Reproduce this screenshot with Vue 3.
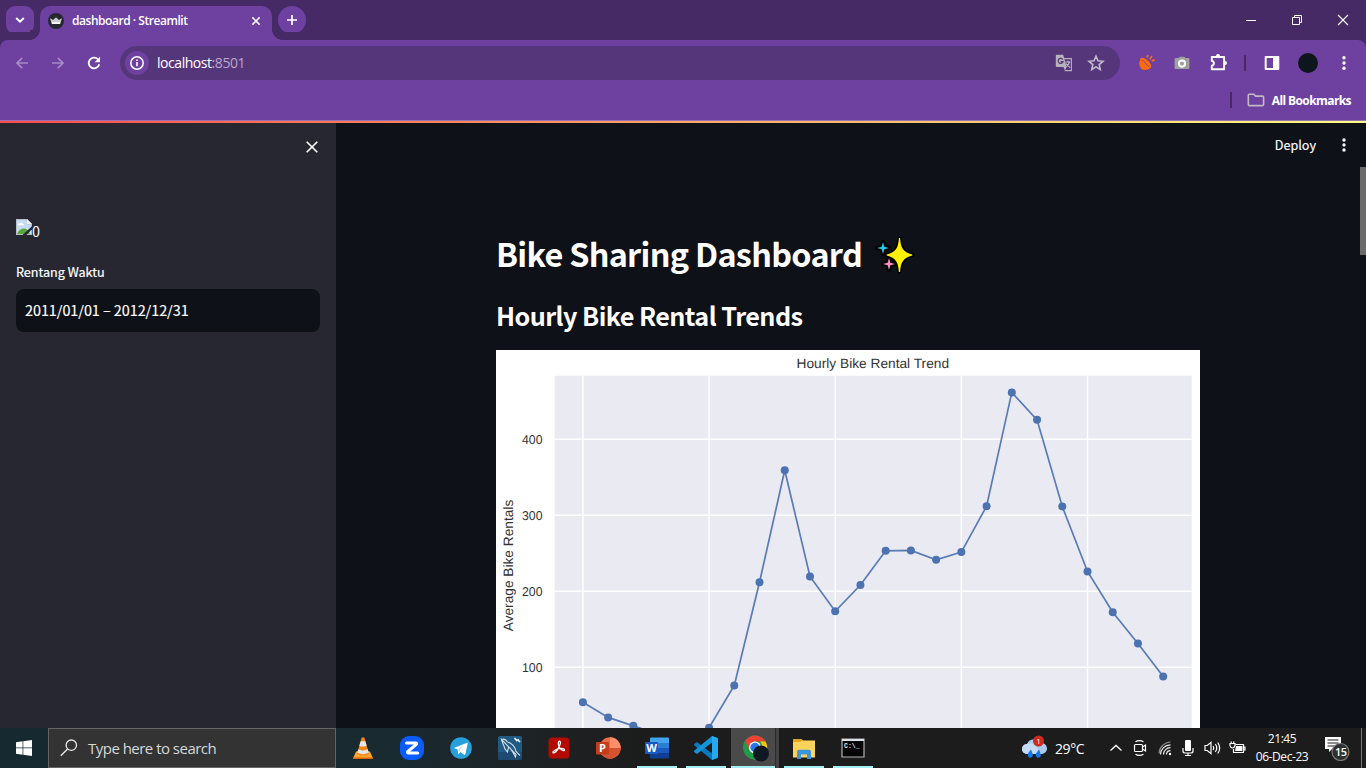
<script setup>
const rentals = [53.9, 34.1, 23, 11.7, 6.4, 20.4, 76.1, 212, 359.2, 219.5, 173.7, 208.2, 253.3, 253.8, 241.4, 251.6, 312, 461.7, 425.6, 311.6, 226.1, 172.4, 131.3, 87.8]
const px = (h) => 86.9 + h * 25.23
const py = (v) => 393.3 - v * 0.76
const points = rentals.map((v, h) => ({ x: px(h), y: py(v) }))
const path = points.map((p) => `${p.x},${p.y}`).join(' ')
const xTicks = [0, 5, 10, 15, 20].map(px)
const yTicks = [400, 300, 200, 100].map((v) => ({ v, y: py(v) }))
</script>

<template>
  <div class="screen">
    <header class="tabs">
      <button class="search-tabs"><svg width="10" height="8" viewBox="0 0 10 8"><path d="M1.2 2 5 5.7 8.8 2" fill="none" stroke="#fff" stroke-width="1.9"/></svg></button>
      <div class="tab">
        <svg class="favicon" width="16" height="16" viewBox="0 0 16 16"><circle cx="8" cy="8" r="8" fill="#262730"/><path d="M2 5.300 5.200 7 8 4.200 10.800 7 14 5.300l-1.800 5.500H3.800z" fill="#ccc"/><path d="M3.700 9.300h8.600l-.5 1.600H4.200z" fill="#fff"/></svg>
        <span class="tab-title">dashboard · Streamlit</span>
        <svg class="tab-close" width="10" height="10" viewBox="0 0 10 10"><path d="m1.4 1.4 7.2 7.2m0-7.2L1.4 8.6" stroke="#fff" stroke-width="1.5"/></svg>
      </div>
      <button class="new-tab"><svg width="12" height="12" viewBox="0 0 12 12"><path d="M6 1v10M1 6h10" stroke="#fff" stroke-width="1.7"/></svg></button>
      <div class="window-controls">
        <svg width="12" height="12" viewBox="0 0 12 12"><path d="M1 6.5h10" stroke="#fff"/></svg>
        <svg width="12" height="12" viewBox="0 0 12 12"><path d="M1.5 3.5h7v7h-7zM3.5 3V1.5h7v7H9" fill="none" stroke="#fff"/></svg>
        <svg width="12" height="12" viewBox="0 0 12 12"><path d="m1 1 10 10M11 1 1 11" stroke="#fff" stroke-width="1.1"/></svg>
      </div>
    </header>

    <div class="chrome-body">
      <div class="toolbar">
        <svg class="nav back" width="16" height="16" viewBox="0 0 16 16"><path d="M14 8H3m5.200-5.200L3 8l5.200 5.200" fill="none" stroke="#a68ac6" stroke-width="1.7"/></svg>
        <svg class="nav forward" width="16" height="16" viewBox="0 0 16 16"><path d="M2 8h11M7.800 2.800 13 8l-5.200 5.200" fill="none" stroke="#a68ac6" stroke-width="1.7"/></svg>
        <svg class="nav reload" width="16" height="16" viewBox="0 0 16 16"><path d="M13.200 9.200A5.300 5.300 0 1 1 12 4.500" fill="none" stroke="#fff" stroke-width="1.8"/><path d="M14 1.700v5.500H8.600z" fill="#fff"/></svg>
        <div class="omnibox">
          <span class="info"><svg width="16" height="16" viewBox="0 0 16 16"><circle cx="8" cy="8" r="6.200" fill="none" stroke="#fff" stroke-width="1.5"/><path d="M8 7v4.200M8 4.400v1.700" stroke="#fff" stroke-width="1.600"/></svg></span>
          <span class="url">localhost<i>:8501</i></span>
          <svg class="translate" width="18" height="18" viewBox="0 0 18 18"><path d="M8 4.600h8.400v12H9.800" fill="none" stroke="#b7aebf" stroke-width="1.100"/><path d="M1.800.8h6.400L11.700 13H1.800a1 1 0 0 1-1-1V1.800a1 1 0 0 1 1-1z" fill="#b7b0bd"/><path d="M7.800 5.500A2.500 2.500 0 1 0 8 7.700H5.800" fill="none" stroke="#54366f" stroke-width="1.200"/><path d="M10.500 8h5m-2.500-1.200V8m1.500 0c-.5 2-1.500 3.400-3 4.600m-.5-3 4.200 4" fill="none" stroke="#c6bece" stroke-width="1.100"/><path d="m8.500 13 1.400 3.600 1.800-3.600z" fill="#b7b0bd"/></svg>
          <svg class="star" width="18" height="18" viewBox="0 0 18 18"><path d="m9 2.200 2 4.600 5 .5-3.800 3.300 1.100 4.900L9 12.900l-4.300 2.600 1.100-4.900L2 7.300l5-.5z" fill="none" stroke="#c3bacc" stroke-width="1.600"/></svg>
        </div>
        <svg class="ext1" width="20" height="20" viewBox="0 0 20 20"><path d="M4.100 5.600C1.700 8.600 1.600 13 4.200 15.400s7 2 9.800-1.200z" fill="#ff6a0c"/><path d="M3.600 5c2.400-.9 5 .3 7.200 2.500s4 4.900 3.200 6.900c-2 1-5.400-.7-7.800-3.200C4 8.800 2.700 6.200 3.600 5z" fill="#ff6a0c"/><path d="m5.100 6.700 6.800 7.200" stroke="#713aa0" stroke-width=".8"/><path d="M10 4.400 11 2m1.700 4.300L15 3.200m-.3 4.700 3-1" stroke="#ff6a0c" stroke-width="1.700"/></svg>
        <svg class="ext2" width="20" height="20" viewBox="0 0 20 20"><path d="M3.800 5h2.700L7.800 3.700h4.400L13.500 5h2.700a1.200 1.200 0 0 1 1.200 1.200v8.700a1.200 1.200 0 0 1-1.200 1.200H3.800a1.200 1.200 0 0 1-1.200-1.200V6.200A1.200 1.200 0 0 1 3.800 5z" fill="#a0a0a0"/><circle cx="10" cy="10.600" r="3.100" fill="none" stroke="#fff" stroke-width="2"/></svg>
        <svg class="puzzle" width="20" height="20" viewBox="0 0 20 20"><path d="M2.800 4h12.300v12.300H2.800v-3.500c2.800-.4 2.800-4.500 0-4.900z" fill="none" stroke="#fff" stroke-width="1.900" stroke-linejoin="round"/><path d="M7 3.500V3a2 2 0 0 1 4 0v.5zM15.500 8.100h.5a2 2 0 0 1 0 4h-.5z" fill="#fff"/></svg>
        <i class="vsep"></i>
        <svg class="panel" width="20" height="20" viewBox="0 0 20 20"><path d="M3.700 4h12.600v12H3.700z" fill="none" stroke="#fff" stroke-width="2" stroke-linejoin="round"/><path d="M11 4h5.300v12H11z" fill="#fff"/></svg>
        <i class="avatar"></i>
        <svg class="dots" width="20" height="20" viewBox="0 0 20 20" fill="#fff"><circle cx="10" cy="4.800" r="1.700"/><circle cx="10" cy="10" r="1.700"/><circle cx="10" cy="15.200" r="1.700"/></svg>
      </div>
      <div class="bookmarks">
        <i class="vsep"></i>
        <svg width="18" height="14" viewBox="0 0 18 14"><path d="M2.300 1.300h4.600l1.700 1.800h7q1 0 1 1v7.500q0 1-1 1H2.300q-1 0-1-1V2.300q0-1 1-1z" fill="none" stroke="#c0b8c4" stroke-width="1.600"/></svg>
        <span>All Bookmarks</span>
      </div>
    </div>
    <div class="decoration"></div>

    <div class="page">
      <aside class="sidebar">
        <svg class="side-close" width="14" height="14" viewBox="0 0 14 14"><path d="m1.700 1.700 10.600 10.600m0-10.600L1.700 12.300" stroke="#fff" stroke-width="1.600"/></svg>
        <div class="missing">
          <svg width="16" height="16" viewBox="0 0 16 16"><path d="M0 0h11l5 5v11H0z" fill="#b9bec5"/><path d="M1 1h9.800v4.400H15V15H1z" fill="#c5dbf8"/><path d="M2 5.800c0-1.400 1.400-1.800 2-1.200.8-1.800 3-1 3 .5 1.300-.1 1.200 1.200 1 1.200H2z" fill="#fff"/><path d="M1 15c1.200-3.400 3.700-5.500 6.600-5.500 3 0 5.300 2 6.400 5.500z" fill="#5ba83a"/><path d="M11 0v5h5z" fill="#f4f5f8"/><path d="M16 7.200v3L10.300 16H6.500z" fill="#262730"/></svg><span>0</span>
        </div>
        <label>Rentang Waktu</label>
        <div class="date">2011/01/01 – 2012/12/31</div>
      </aside>
      <main class="main">
        <div class="app-menu">
          <span>Deploy</span>
          <svg width="6" height="16" viewBox="0 0 6 16" fill="#fafafa"><circle cx="3" cy="3" r="1.700"/><circle cx="3" cy="8" r="1.700"/><circle cx="3" cy="13" r="1.700"/></svg>
        </div>
        <div class="content">
          <h1><span>Bike Sharing Dashboard</span>
            <svg width="40" height="40" viewBox="0 0 40 40"><g stroke="#000" stroke-width="4.400" stroke-linejoin="round"><path d="m8 8 1.300 4.700L14 14l-4.700 1.300L8 20l-1.300-4.700L2 14l4.700-1.300z" transform="translate(0 -1)"/><path d="m14 23 1.300 4.700L20 29l-4.700 1.300L14 35l-1.300-4.700L8 29l4.700-1.300z"/><path d="M24.500 3.500c.8 9 3 13.500 12.800 16.500-9.800 3-12 7.500-12.800 16.500C23.700 27.500 21.500 23 11.700 20c9.800-3 12-7.500 12.800-16.500z"/></g><path d="m8 8 1.300 4.700L14 14l-4.700 1.300L8 20l-1.300-4.700L2 14l4.700-1.300z" transform="translate(0 -1)" fill="#26c6ed"/><path d="m14 23 1.300 4.700L20 29l-4.700 1.300L14 35l-1.300-4.700L8 29l4.700-1.300z" fill="#ff8fc4"/><path d="M23.900 3h1.200c.6 9.500 2.800 14 12.200 16.500v1C27.900 23 25.700 27.500 25.100 37h-1.200c-.6-9.500-2.800-14-12.200-16.500v-1C21.100 17 23.300 12.500 23.900 3z" fill="#fff100"/></svg>
          </h1>
          <h2>Hourly Bike Rental Trends</h2>
          <svg class="chart" width="704" height="378" viewBox="0 0 704 378">
            <path d="M0 0h704v378H0z" fill="#fff"/>
            <path d="M58.700 25.700h637V378h-637z" fill="#eaeaf2"/>
            <g stroke="#fff" stroke-width="1.400">
              <path v-for="x in xTicks" :key="x" :d="`M${x} 25.700V378`"/>
              <path v-for="t in yTicks" :key="t.v" :d="`M58.700 ${t.y}h637`"/>
            </g>
            <g class="chart-text">
              <text x="376.800" y="18" text-anchor="middle" textLength="152.500" lengthAdjust="spacingAndGlyphs">Hourly Bike Rental Trend</text>
              <text v-for="t in yTicks" :key="t.v" class="tick" x="46.500" :y="t.y + 4.600" text-anchor="end" textLength="20.500" lengthAdjust="spacingAndGlyphs">{{ t.v }}</text>
              <text transform="translate(17.200 215.500) rotate(-90)" text-anchor="middle" textLength="131.500" lengthAdjust="spacingAndGlyphs">Average Bike Rentals</text>
            </g>
            <polyline :points="path" fill="none" stroke="#4c72b0" stroke-width="1.700" stroke-opacity=".92"/>
            <circle v-for="p in points" :key="p.x" :cx="p.x" :cy="p.y" r="4" fill="#4c72b0"/>
          </svg>
        </div>
        <i class="scroll-thumb"></i>
      </main>
    </div>

    <footer class="taskbar">
      <div class="start"><svg width="16" height="16" viewBox="0 0 16 16" fill="#fff"><path d="M0 2.200 6.600 1.300v6.300H0zM7.300 1.200 16 0v7.600H7.300zM0 8.300h6.600v6.400L0 13.800zM7.300 8.300H16V16l-8.700-1.200z"/></svg></div>
      <div class="search">
        <svg width="18" height="18" viewBox="0 0 18 18"><circle cx="11.300" cy="6.200" r="5.200" fill="none" stroke="#e6e6e6" stroke-width="1.300"/><path d="m7.600 10-6.800 6.800" stroke="#e6e6e6" stroke-width="1.400"/></svg>
        <span>Type here to search</span>
      </div>
      <div class="apps">
        <div class="app"><svg width="24" height="24" viewBox="0 0 24 24"><path d="m5 15.500-3 7h20l-3-7z" fill="#ffa52b"/><path d="M2 21.500h20V23H2z" fill="#dd6800"/><path d="M10.600 1.800q1.400-1 2.800 0L18 18q-6 3-12 0z" fill="#f58413"/><path d="M9.700 5.200h4.600l1.400 4.500q-3.700 1.700-7.400 0zM7.200 13.300q4.800 2.200 9.600 0l1 3.500q-5.800 2.900-11.600 0z" fill="#e3e5e6"/></svg></div>
        <div class="app"><svg width="24" height="24" viewBox="0 0 24 24"><rect width="24" height="24" rx="9" fill="#0b5cff"/><path d="M6.500 7h9.700q1 .2 0 1.300L7.800 15.500Q7 17 8.400 17h9.300" fill="none" stroke="#fff" stroke-width="3" stroke-linecap="round"/></svg></div>
        <div class="app"><svg width="24" height="24" viewBox="0 0 24 24"><circle cx="12" cy="12" r="10.800" fill="#27a1dc"/><path d="m4.800 11.900 12.700-5c.8-.3 1.300.1 1.100 1.100l-2.200 10c-.2.900-.8 1-1.600.6l-3.300-2.500-1.600 1.600c-.5.400-.8.300-.9-.5l-.4-3.800z" fill="#fff"/><path d="m9 13 6.200-4.200-4.500 5.100-.2 2.300z" fill="#c6dfed"/></svg></div>
        <div class="app"><svg width="24" height="24" viewBox="0 0 24 24"><rect width="24" height="24" rx="2" fill="#215a83"/><path d="M0 16h24v6a2 2 0 0 1-2 2H2a2 2 0 0 1-2-2z" fill="#1d4a70"/><path d="M3.500 3.500c2.500-1 4.500 0 6 2.500 5 1.500 7.500 5 8.500 9.500l4 4m-4-1-.5 2.500-2.500-4.500c-1.500-2-2-4.500-4.500-5.500L9.500 16 7 13C6 9 4 6.500 3.500 3.500z" fill="none" stroke="#cfdde5" stroke-width="1.100"/><path d="m16.500 2 2.200 2.400 2.300-.8M20 4l2 2" stroke="#e9f2f7" stroke-width="1.700"/></svg></div>
        <div class="app"><svg width="24" height="24" viewBox="0 0 24 24"><rect x="1.500" y="1.500" width="21" height="21" rx="3.500" fill="#b30b00"/><path d="M11.700 5.700c1-1.500 2.500.4 1.200 3.100-1.200 3.200-3.600 7-5.500 7.900-1.800.8-1.900-1-.3-2 2.300-1.500 6.400-2.500 8.800-2.100 2.400.5 2 2.200.4 1.900-3-.4-4.900-4-5-6.700 0-.9.100-1.700.4-2.100z" fill="none" stroke="#fff" stroke-width="1.300"/></svg></div>
        <div class="app"><svg width="26" height="24" viewBox="0 0 26 24"><circle cx="15" cy="12" r="10.700" fill="#ed6c47"/><path d="M15 1.300A10.700 10.700 0 0 1 25.700 12H15z" fill="#ff8f6b"/><path d="M4.300 12h21.400a10.700 10.700 0 0 1-21.400 0z" fill="#d35230"/><rect x="1" y="6" width="13" height="12.500" rx="1" fill="#c43e1c"/><text class="logo-letter" x="7.500" y="16.200">P</text></svg></div>
        <div class="app run"><svg width="26" height="24" viewBox="0 0 26 24"><path d="M7 1.500h17q1 0 1 1V7H6V2.500q0-1 1-1z" fill="#41a5ee"/><path d="M6 7h19v5H6z" fill="#2b7cd3"/><path d="M6 12h19v5H6z" fill="#185abd"/><path d="M6 17h19v4.500q0 1-1 1H7q-1 0-1-1z" fill="#103f91"/><rect x="1" y="6" width="13" height="12" rx="1" fill="#185abd"/><text class="logo-letter" x="7.500" y="16">W</text></svg></div>
        <div class="app run"><svg width="24" height="24" viewBox="0 0 24 24"><path d="M0 8.300 2 6.400q.8-.5 1.500 0L24 22l-6 2L.1 9.300q-.5-.5-.1-1z" fill="#0879bd"/><path d="M0 15.700 2 17.600q.8.500 1.500 0L24 2l-6-2L.1 14.700q-.5.500-.1 1z" fill="#1593d8"/><path d="M18 0v24l6-2.600V2.600z" fill="#27a9ef"/></svg></div>
        <div class="app run active"><svg width="27" height="28" viewBox="0 0 27 28"><circle cx="13" cy="13.500" r="12" fill="#249b4b"/><path d="M3 7A12 12 0 0 1 23.500 7.500H13A6 6 0 0 0 7.700 16z" fill="#ed4134"/><path d="M23.500 7.500A12 12 0 0 1 12.500 25.500l5.700-9a6 6 0 0 0-.2-9z" fill="#fbc116"/><circle cx="13" cy="13.500" r="6" fill="#fff"/><circle cx="13" cy="13.500" r="4.700" fill="#2877e8"/><circle cx="19" cy="19.500" r="8" fill="#101823"/></svg></div>
        <div class="app run"><svg width="24" height="24" viewBox="0 0 24 24"><path d="M1 3h8.500l2 2H23v16H1z" fill="#e4a51b"/><path d="M1 6h7l2-1.500h13v17H1z" fill="#ffd35a"/><path d="M5 23v-7.200q0-2 2-2h10q2 0 2 2V23h-4v-4.500H9V23z" fill="#3a96dd"/></svg></div>
        <div class="app run"><svg width="24" height="20" viewBox="0 0 24 20"><path d="M1 1h22v18H1z" fill="#050505" stroke="#aeb2b5" stroke-width="1.200"/><path d="M1 1h22v2H1z" fill="#dce2e6"/><text class="prompt" x="3" y="9.500">C:\_</text></svg></div>
      </div>
      <div class="tray">
        <svg class="weather" width="26" height="26" viewBox="0 0 26 26"><path d="M6 19a5 5 0 0 1 0-10A8 8 0 0 1 20 8a5.500 5.500 0 0 1 1 11z" fill="#a9caed"/><path d="M6 19a4.500 4.500 0 0 1 0-10c2-1.300 8-1 10 3l4 7z" fill="#c4dcf5"/><path d="M10 14.500c-3 3.500-3.500 4.500-3 6.500.5 2.500 4.500 2.300 4.800-.4.200-2-.8-3.600-1.800-6.100zm8 0c-3 3.500-3.500 4.500-3 6.500.5 2.500 4.500 2.300 4.800-.4.200-2-.8-3.600-1.800-6.100z" fill="#1677ef"/><circle cx="17.500" cy="6" r="5.500" fill="#cf2b1d"/><text class="badge-one" x="15.200" y="9">1</text></svg>
        <span class="temp">29°C</span>
        <svg class="chev" width="14" height="14" viewBox="0 0 14 14"><path d="m1.500 9.500 5.500-5 5.500 5" fill="none" stroke="#fff" stroke-width="1.300"/></svg>
        <svg class="meet" width="16" height="18" viewBox="0 0 16 18" fill="none" stroke="#fff" stroke-width="1.200"><rect x="2.500" y="5.500" width="8" height="7" rx="1"/><path d="m10.500 8 3-2v6l-3-2M3.500 2.700q4-2.200 8 0M3.500 15.300q4 2.200 8 0"/></svg>
        <svg class="wifi" width="16" height="16" viewBox="0 0 16 16" fill="none" stroke-width="1.200"><path d="M2 13.500A12 12 0 0 1 13.500 2" stroke="#888"/><path d="M3.500 14.500A10 10 0 0 1 13.500 4.800M6.500 14.500a7 7 0 0 1 7-6.800M9.500 14.500a4 4 0 0 1 4-3.800" stroke="#eee"/><circle cx="13" cy="14" r="1.200" fill="#fff"/></svg>
        <svg class="mic" width="14" height="18" viewBox="0 0 14 18"><rect x="4" y="1" width="6" height="11" rx="1" fill="#fff"/><path d="M2 9v3q0 2 2 2h6q2 0 2-2V9M7 14v2.500M4 16.500h6" fill="none" stroke="#fff" stroke-width="1.200"/></svg>
        <svg class="speaker" width="18" height="16" viewBox="0 0 18 16" fill="none" stroke="#fff" stroke-width="1.200"><path d="M1 5.500h2.300L7 2.300v11.400l-3.700-3.200H1zM9 6q1.500 2 0 4M11.300 4q3 4 0 8M13.700 2.500q4 5.500 0 11"/></svg>
        <svg class="battery" width="17" height="16" viewBox="0 0 17 16" fill="none" stroke="#fff" stroke-width="1.200"><path d="M6.500 4.500h8v8h-10V9M14.500 7h1.500v3h-1.500"/><path d="M7.500 6.700h5.300v3.600H6.800z" fill="#fff"/><path d="M1 3.500h5v2.200Q5.500 8 3.500 8T1 5.700zM2.200 1.500v2m2.600-2v2"/></svg>
        <div class="clock"><span class="time">21:45</span><span class="day">06-Dec-23</span></div>
        <div class="notice"><svg width="26" height="26" viewBox="0 0 26 26"><path d="M1 2h16v12H8l-3 3v-3H1z" fill="#fff"/><path d="M3.500 5h11M3.500 8h11M3.500 11h7" stroke="#1c1c1c"/><circle cx="16.500" cy="17" r="8.500" fill="#303030" stroke="#7c7c7c" stroke-width="1.200"/><text class="badge-count" x="10.900" y="21">15</text></svg></div>
      </div>
    </footer>
  </div>
</template>

<style>
html, body { margin: 0; overflow: hidden; background: #0e1117; }
</style>

<style scoped>
* { box-sizing: border-box; }
svg { display: block; flex: none; }
i { font-style: normal; }
.screen { width: 1366px; height: 768px; display: flex; flex-direction: column; overflow: hidden; font-family: "Open Sans", sans-serif; color: #fff; white-space: nowrap; }
.tabs { height: 40px; flex: none; display: flex; background: #462a65; }
button { border: 0; padding: 0; display: flex; align-items: center; justify-content: center; background: #6e41a1; width: 28px; height: 28px; margin-top: 6px; }
.search-tabs { margin-left: 6px; border-radius: 9px; }
.tab { position: relative; margin: 6px 0 0 6px; width: 232px; height: 34px; background: #6e41a1; border-radius: 10px 10px 0 0; display: flex; padding: 0 11px 5px 8px; align-items: center; }
.tab::before, .tab::after { content: ""; position: absolute; bottom: 0; width: 10px; height: 10px; }
.tab::before { left: -10px; background: radial-gradient(circle at 0 0, #462a65 9.5px, #6e41a1 10px); }
.tab::after { right: -10px; background: radial-gradient(circle at 100% 0, #462a65 9.5px, #6e41a1 10px); }
.tab-title { font-size: 12px; font-weight: 600; letter-spacing: -.46px; margin-left: 8px; line-height: 18px; }
.tab-close { margin-left: auto; }
.new-tab { border-radius: 50%; margin-left: 6px; }
.window-controls { margin-left: auto; display: flex; gap: 34px; padding: 14px 17px 0 0; }
.chrome-body { flex: none; height: 81px; background: #6e41a1; border-bottom: 1px solid #9571b8; border-radius: 8px 8px 0 0; box-shadow: 0 -8px 0 #462a65; }
.toolbar { height: 46px; display: flex; align-items: center; }
.back { margin-left: 14px; }
.forward, .reload { margin-left: 20px; }
.omnibox { height: 34px; width: 1000px; margin-left: 18px; border-radius: 17px; background: #56367a; display: flex; align-items: center; padding-left: 5px; }
.info { width: 24px; height: 24px; border-radius: 50%; background: #6e41a1; display: flex; align-items: center; justify-content: center; }
.url { margin-left: 8px; font-size: 14px; letter-spacing: -.45px; position: relative; top: -1px; }
.url i { color: #b9a5cc; }
.translate { margin-left: auto; }
.star { margin: 0 15px 0 14px; }
.ext1 { margin-left: 17px; } .ext2 { margin-left: 15px; } .puzzle { margin-left: 17px; }
.vsep { width: 2px; height: 16px; background: #462a65; }
.toolbar .vsep { margin-left: 15px; }
.panel, .avatar, .dots { margin-left: 16px; }
.avatar { width: 20px; height: 20px; border-radius: 50%; background: #0d151d; }
.bookmarks { display: flex; align-items: center; height: 28px; justify-content: flex-end; padding-right: 15px; font-size: 12px; font-weight: 700; letter-spacing: -.59px; }
.bookmarks svg { margin: 0 7px 0 15px; }
.decoration { flex: none; height: 2px; background: linear-gradient(90deg, #ff4b4b, #ffff80); }
.page { height: 605px; flex: none; display: flex; background: #0e1117; font-family: "Noto Sans CJK SC", sans-serif; }
.sidebar { width: 336px; padding: 0 16px; background: #262730; }
.side-close { margin: 17px 1px 0 auto; }
.missing { display: flex; margin-top: 65px; height: 40px; font-size: 14.4px; line-height: 20px; }
.missing span { margin-top: 2px; }
label { display: block; margin-top: 3px; font-size: 12.6px; font-weight: 400; -webkit-text-stroke: .2px #fff; line-height: 20px; }
.date { height: 43px; margin-top: 7px; padding-left: 9px; border-radius: 8px; background: #0e1117; font-size: 14.4px; letter-spacing: -.04px; line-height: 41px; -webkit-text-stroke: .15px #fff; }
.main { position: relative; width: 1030px; overflow: hidden; }
.app-menu { display: flex; height: 44px; align-items: center; justify-content: flex-end; padding-right: 19px; font-size: 12.6px; -webkit-text-stroke: .15px #fff; }
.app-menu span { padding-bottom: 2px; }
.app-menu svg { margin-left: 25px; }
.content { width: 704px; margin-left: 160px; }
h1, h2 { margin: 0; }
h1 { height: 52px; margin-top: 62px; font-size: 32.4px; line-height: 48px; letter-spacing: -.71px; display: flex; align-items: center; }
h1 span { padding-bottom: 4px; }
h1 svg { margin-left: 13px; }
h2 { height: 36px; margin-top: 17px; font-size: 25.2px; line-height: 34px; letter-spacing: -.56px; }
.chart { margin-top: 16px; }
.chart-text { font-family: "Liberation Sans", sans-serif; font-size: 13.6px; fill: #333; text-rendering: geometricPrecision; }
.tick { font-size: 12.8px; }
.scroll-thumb { position: absolute; right: 0; top: 44px; width: 6px; height: 88px; background: #6b6b6b; }
.taskbar { flex: none; height: 40px; display: flex; background: linear-gradient(90deg, #172930 0, #192a31 400px, #1e2224 540px, #1c1c1c 640px); }
.start { width: 48px; display: flex; align-items: center; justify-content: center; }
.search { width: 288px; border: 1px solid #646464; background: #333; display: flex; align-items: center; padding-left: 11px; font-size: 15px; color: #d8d8d8; }
.search span { margin-left: 10px; letter-spacing: -.52px; }
.apps { display: flex; margin-left: 2px; }
.app { width: 49px; display: flex; align-items: center; justify-content: center; position: relative; }
.run::after { content: ""; position: absolute; bottom: 0; left: 5px; width: 40px; height: 2px; background: #a5eef5; }
.active { background: linear-gradient(90deg, transparent 1px, #4a4a4a 1px, #4a4a4a 45px, #2b2b2b 45px, #2b2b2b 46px, #424242 46px); padding-left: 1px; }
.active::after { width: 44px; left: 1px; }
.logo-letter { font-size: 11px; font-weight: 700; fill: #fff; text-anchor: middle; }
.prompt { font-family: "Liberation Mono", monospace; font-size: 6.5px; font-weight: 700; fill: #e4e4e4; }
.tray { margin-left: auto; display: flex; align-items: center; padding-right: 4px; }
.temp { font-size: 14px; letter-spacing: -.4px; width: 30px; margin-left: 8px; }
.chev { margin-left: 24px; } .meet { margin-left: 9px; } .wifi { margin-left: 9px; } .mic { margin-left: 8px; } .speaker { margin-left: 9px; } .battery { margin-left: 7px; }
.clock { width: 56px; margin-left: 8px; display: flex; flex-direction: column; align-items: center; font-size: 12px; line-height: 18px; letter-spacing: -.42px; }
.notice { margin-left: 14px; width: 38px; border-right: 1px solid #777; height: 40px; display: flex; align-items: center; }
.badge-one { font-size: 8px; fill: #fff; }
.badge-count { font-size: 11px; font-weight: 600; letter-spacing: -.5px; fill: #fff; }
</style>
